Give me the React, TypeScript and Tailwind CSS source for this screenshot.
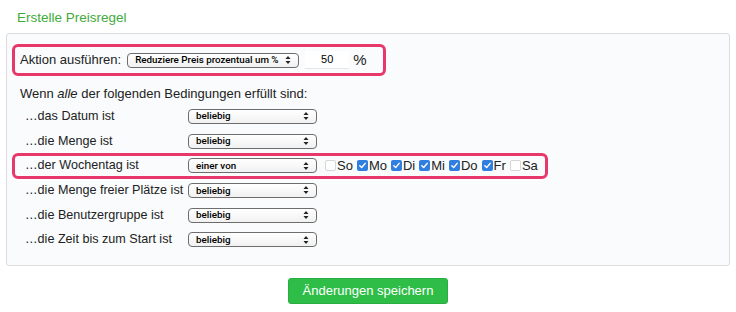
import React from 'react';

const font = { fontFamily: '"Liberation Sans", Arial, sans-serif' };

const Arrows: React.FC = () => (
  <svg className="absolute right-[7px] top-1/2 -translate-y-1/2 w-[6px] h-[9px]" viewBox="0 0 6 9">
    <path d="M3 0.5 L5.5 3.5 L0.5 3.5 Z" fill="#222" />
    <path d="M3 8.5 L5.5 5.5 L0.5 5.5 Z" fill="#222" />
  </svg>
);

const MacSelect: React.FC<{ value: string; width: string }> = ({ value, width }) => (
  <div
    className={`relative h-[15px] ${width} rounded-[4px] border border-[#6d6d6d] bg-gradient-to-b from-white to-[#f1f1f1] flex items-center pl-[7px] font-['Roboto',sans-serif] font-medium text-[9.8px] text-black leading-none shrink-0 whitespace-nowrap`}
  >
    {value}
    <Arrows />
  </div>
);

const Check: React.FC<{ label: string; checked?: boolean }> = ({ label, checked }) => (
  <label className="flex items-center gap-[1px] text-[13px] text-[#222]">
    {checked ? (
      <span className="w-[11px] h-[11px] rounded-[2px] bg-[#2f7ee0] flex items-center justify-center">
        <svg viewBox="0 0 10 10" className="w-[9px] h-[9px]">
          <path d="M2 5.2 L4.1 7.3 L8 2.6" stroke="white" strokeWidth="1.6" fill="none" strokeLinecap="round" strokeLinejoin="round" />
        </svg>
      </span>
    ) : (
      <span className="w-[11px] h-[11px] rounded-[2px] bg-white border border-[#d6d6d6]" />
    )}
    {label}
  </label>
);

const Row: React.FC<{ label: string; children?: React.ReactNode }> = ({ label, children }) => (
  <div className="h-[24.7px] flex items-center pl-[13px] text-[12.6px] text-[#222]">
    <span className="w-[163px] shrink-0 whitespace-nowrap">{label}</span>
    {children}
  </div>
);

export default function App() {
  const days: [string, boolean][] = [
    ['So', false],
    ['Mo', true],
    ['Di', true],
    ['Mi', true],
    ['Do', true],
    ['Fr', true],
    ['Sa', false],
  ];

  return (
    <div className="w-[736px] h-[312px] bg-white" style={font}>
      <div className="pt-[8px] pl-[17px] h-[33px] text-[13.5px] text-[#3fab3b]">Erstelle Preisregel</div>

      <div className="mx-[6px] h-[233px] rounded-[3px] border border-[#dcdcdc] bg-[#f9fbfc] px-[5px] pt-[10px]">
        {/* Aktion */}
        <div className="w-[374px] h-[32px] rounded-[6px] border-[3px] border-[#e8386b] flex items-center pl-[5px] text-[13px] text-[#222]">
          <span className="mr-[6px] whitespace-nowrap">Aktion ausführen:</span>
          <MacSelect value="Reduziere Preis prozentual um %" width="w-[172px]" />
          <div className="ml-[6px] w-[44px] h-[18px] bg-white border-b border-[#e6e6e6] flex items-center justify-center text-[11px] text-black">
            50
          </div>
          <span className="ml-[4px] text-[15px]">%</span>
        </div>

        <div className="mt-[8px] h-[20px] pl-[8px] flex items-center text-[13px] text-[#222]">
          Wenn&nbsp;<i>alle</i>&nbsp;der folgenden Bedingungen erfüllt sind:
        </div>

        <Row label="…das Datum ist">
          <MacSelect value="beliebig" width="w-[129px]" />
        </Row>
        <Row label="…die Menge ist">
          <MacSelect value="beliebig" width="w-[129px]" />
        </Row>

        <div className="w-[536px] h-[26px] -my-[0.65px] rounded-[6px] border-[3px] border-[#e8386b] flex items-center pl-[10px] text-[12.6px] text-[#222]">
          <span className="w-[163px] shrink-0">…der Wochentag ist</span>
          <MacSelect value="einer von" width="w-[129px]" />
          <div className="ml-[8px] flex items-center gap-[4px]">
            {days.map(([d, c]) => (
              <Check key={d} label={d} checked={c} />
            ))}
          </div>
        </div>

        <Row label="…die Menge freier Plätze ist">
          <MacSelect value="beliebig" width="w-[129px]" />
        </Row>
        <Row label="…die Benutzergruppe ist">
          <MacSelect value="beliebig" width="w-[129px]" />
        </Row>
        <Row label="…die Zeit bis zum Start ist">
          <MacSelect value="beliebig" width="w-[129px]" />
        </Row>
      </div>

      <div className="flex justify-center mt-[12px]">
        <button className="w-[160px] h-[26px] rounded-[3px] bg-[#2ebd47] text-white text-[13px] border border-[#28ad40]">
          Änderungen speichern
        </button>
      </div>
    </div>
  );
}
